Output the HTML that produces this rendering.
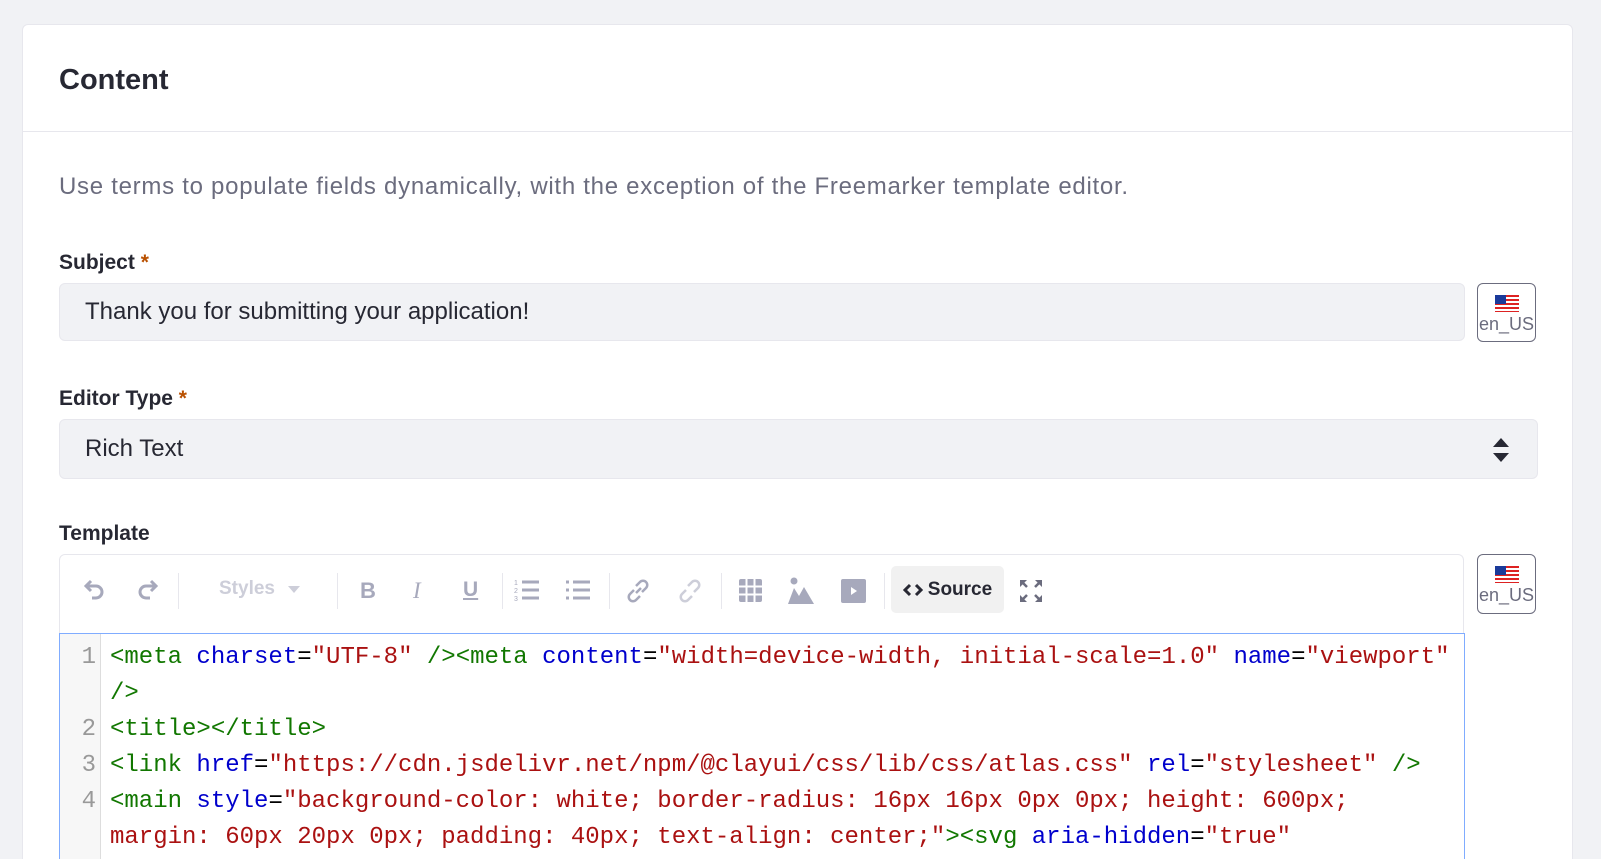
<!DOCTYPE html>
<html style="overflow:hidden;height:859px"><head><meta charset="utf-8"><style>
*{box-sizing:border-box;margin:0;padding:0}
body{width:1601px;height:859px;background:#f1f2f5;font-family:"Liberation Sans",sans-serif;position:relative;overflow:hidden;color:#272833}
.card{position:absolute;left:22px;top:24px;width:1551px;height:850px;background:#fff;border:1px solid #e7e7ed;border-radius:6px;overflow:hidden}
.abs{position:absolute}
.hdr{left:0;top:106px;width:100%;height:1px;background:#e7e7ed}
.title{left:36px;top:39px;font-size:29px;font-weight:bold;color:#272833}
.desc{left:36px;top:148px;font-size:24px;color:#6b6c7e;letter-spacing:0.72px}
.lbl{font-size:21px;font-weight:bold;color:#272833}
.lbl b{color:#b95000}
.inp{background:#f1f2f5;border:1px solid #e7e7ed;border-radius:6px;font-size:24px;color:#272833;padding-left:25px;display:flex;align-items:center}
.flag{width:59px;height:59px;border:1px solid #6b6c7e;border-radius:6px;background:#fff;text-align:center;font-size:18px;color:#6b6c7e}
.flag svg{display:block;margin:11px auto 2px}
.tb{left:36px;top:529px;width:1405px;height:80px;border:1px solid #e7e7ed;border-bottom:none;border-radius:6px 6px 0 0}
.ic{position:absolute;top:566px}
.sep{position:absolute;top:573px;width:1px;height:36px;background:#e7e7ed}
.ed{left:36px;top:608px;width:1406px;height:260px;border:1px solid #80acff;background:#fff}
.gut{position:absolute;left:0;top:0;width:41px;height:100%;background:#f7f7f7;border-right:1px solid #ddd}
.code{position:absolute;left:50px;top:6px;font-family:"Liberation Mono",monospace;font-size:24px;line-height:36px;white-space:pre;color:#000}
.ln{position:absolute;left:0;width:36px;text-align:right;font-family:"Liberation Mono",monospace;font-size:24px;line-height:36px;color:#999}
.t{color:#170}.a{color:#00c}.s{color:#a11}
</style></head><body>
<div class="card">
<div class="abs title">Content</div>
<div class="abs hdr"></div>
<div class="abs desc">Use terms to populate fields dynamically, with the exception of the Freemarker template editor.</div>
<div class="abs lbl" style="left:36px;top:226px">Subject <b>*</b></div>
<div class="abs inp" style="left:36px;top:258px;width:1406px;height:58px">Thank you for submitting your application!</div>
<div class="abs flag" style="left:1454px;top:258px"><svg width="24" height="17" viewBox="0 0 24 17"><rect width="24" height="17" fill="#fff"/><g fill="#d22"><rect y="0" width="24" height="2"/><rect y="4" width="24" height="2"/><rect y="8" width="24" height="2"/><rect y="12" width="24" height="2"/><rect y="16" width="24" height="1"/></g><rect width="11" height="9" fill="#1a3a9a"/></svg>en_US</div>
<div class="abs lbl" style="left:36px;top:362px">Editor Type <b>*</b></div>
<div class="abs inp" style="left:36px;top:394px;width:1479px;height:60px">Rich Text</div>
<svg class="abs" style="left:1469px;top:412px" width="18" height="26" viewBox="0 0 18 26"><path d="M9 1L17 10H1Z M9 25L17 16H1Z" fill="#272833"/></svg>
<div class="abs lbl" style="left:36px;top:497px">Template</div>
<div class="abs flag" style="left:1454px;top:529px;height:60px"><svg width="24" height="17" viewBox="0 0 24 17"><rect width="24" height="17" fill="#fff"/><g fill="#d22"><rect y="0" width="24" height="2"/><rect y="4" width="24" height="2"/><rect y="8" width="24" height="2"/><rect y="12" width="24" height="2"/><rect y="16" width="24" height="1"/></g><rect width="11" height="9" fill="#1a3a9a"/></svg>en_US</div>
<div class="abs tb"></div>
<div class="abs ed"><div class="gut"></div>
<div class="ln" style="top:6px">1</div><div class="ln" style="top:78px">2</div><div class="ln" style="top:114px">3</div><div class="ln" style="top:150px">4</div>
<div class="code"><span class="t">&lt;meta</span> <span class="a">charset</span>=<span class="s">"UTF-8"</span> <span class="t">/&gt;&lt;meta</span> <span class="a">content</span>=<span class="s">"width=device-width, initial-scale=1.0"</span> <span class="a">name</span>=<span class="s">"viewport"</span>
<span class="t">/&gt;</span>
<span class="t">&lt;title&gt;&lt;/title&gt;</span>
<span class="t">&lt;link</span> <span class="a">href</span>=<span class="s">"https://cdn.jsdelivr.net/npm/@clayui/css/lib/css/atlas.css"</span> <span class="a">rel</span>=<span class="s">"stylesheet"</span> <span class="t">/&gt;</span>
<span class="t">&lt;main</span> <span class="a">style</span>=<span class="s">"background-color: white; border-radius: 16px 16px 0px 0px; height: 600px;</span>
<span class="s">margin: 60px 20px 0px; padding: 40px; text-align: center;"</span><span class="t">&gt;&lt;svg</span> <span class="a">aria-hidden</span>=<span class="s">"true"</span></div>
</div>
</div>
<svg class="ic" style="left:83px;top:578px" width="24" height="22" viewBox="0 0 24 22"><path d="M8 3L3 8l5 5M3 8h10a6 6 0 0 1 0 12H9" fill="none" stroke="#a7a9bc" stroke-width="3"/></svg>
<svg class="ic" style="left:135px;top:578px" width="24" height="22" viewBox="0 0 24 22"><path d="M16 3l5 5-5 5M21 8H11a6 6 0 0 0 0 12h4" fill="none" stroke="#a7a9bc" stroke-width="3"/></svg>
<div class="sep" style="left:178px"></div>
<div class="abs" style="left:219px;top:578px;font-size:19px;color:#cdced9;font-weight:bold">Styles</div>
<svg class="abs" style="left:288px;top:586px" width="12" height="7"><path d="M0 0h12L6 7z" fill="#cdced9"/></svg>
<div class="sep" style="left:337px"></div>
<div class="abs" style="left:360px;top:578px;font-size:22px;font-weight:bold;color:#a7a9bc">B</div>
<div class="abs" style="left:413px;top:578px;font-size:23px;font-style:italic;font-family:'Liberation Serif',serif;color:#a7a9bc">I</div>
<div class="abs" style="left:463px;top:578px;font-size:21px;font-weight:bold;color:#a7a9bc;text-decoration:underline">U</div>
<div class="sep" style="left:502px"></div>
<svg class="abs" style="left:514px;top:578px" width="26" height="24" viewBox="0 0 26 24"><text x="0" y="7" font-size="7" fill="#a7a9bc" font-family="Liberation Sans">1</text><text x="0" y="15" font-size="7" fill="#a7a9bc" font-family="Liberation Sans">2</text><text x="0" y="23" font-size="7" fill="#a7a9bc" font-family="Liberation Sans">3</text><path d="M8 4h17M8 12h17M8 20h17" stroke="#a7a9bc" stroke-width="3"/></svg>
<svg class="abs" style="left:565px;top:578px" width="26" height="24" viewBox="0 0 26 24"><path d="M1 4h3M1 12h3M1 20h3M8 4h17M8 12h17M8 20h17" stroke="#a7a9bc" stroke-width="3"/></svg>
<div class="sep" style="left:609px"></div>
<svg class="abs" style="left:626px;top:578px" width="24" height="26" viewBox="0 0 24 26"><path d="M10 15l5-5M8 12l-4 4a4 4 0 0 0 6 6l4-4M16 14l4-4a4 4 0 0 0-6-6l-4 4" fill="none" stroke="#a7a9bc" stroke-width="2.5"/></svg>
<svg class="abs" style="left:678px;top:578px" width="24" height="26" viewBox="0 0 24 26"><path d="M8 12l-4 4a4 4 0 0 0 6 6l4-4M16 14l4-4a4 4 0 0 0-6-6l-4 4" fill="none" stroke="#cdced9" stroke-width="2.5"/></svg>
<div class="sep" style="left:721px"></div>
<svg class="abs" style="left:739px;top:579px" width="23" height="23" viewBox="0 0 23 23"><rect width="23" height="23" rx="2" fill="#a7a9bc"/><path d="M7.5 0v23M15.5 0v23M0 7.5h23M0 15.5h23" stroke="#fff" stroke-width="2"/></svg>
<svg class="abs" style="left:788px;top:577px" width="26" height="27" viewBox="0 0 26 27"><circle cx="6" cy="4" r="3.5" fill="#a7a9bc"/><path d="M0 27L6 11l5 8 5-9 10 17z" fill="#a7a9bc"/></svg>
<svg class="abs" style="left:841px;top:579px" width="25" height="24" viewBox="0 0 25 24"><rect width="25" height="24" rx="2" fill="#a7a9bc"/><path d="M10 8l6 4-6 4z" fill="#fff"/></svg>
<div class="sep" style="left:884px"></div>
<div class="abs" style="left:891px;top:566px;width:113px;height:47px;background:#f1f1f1;border-radius:5px;font-size:19px;font-weight:bold;color:#272833;display:flex;align-items:center;justify-content:center;gap:5px"><svg width="20" height="14" viewBox="0 0 20 14"><path d="M7 2L2 7l5 5M13 2l5 5-5 5" fill="none" stroke="#272833" stroke-width="3"/></svg>Source</div>
<svg class="abs" style="left:1018px;top:578px" width="26" height="26" viewBox="0 0 26 26"><path d="M2 2h7L2 9zM24 2h-7l7 7zM2 24h7l-7-7zM24 24h-7l7-7z" fill="#6b6c7e"/><path d="M4 4l5 5M22 4l-5 5M4 22l5-5M22 22l-5-5" stroke="#6b6c7e" stroke-width="2.5"/></svg>
</body></html>
